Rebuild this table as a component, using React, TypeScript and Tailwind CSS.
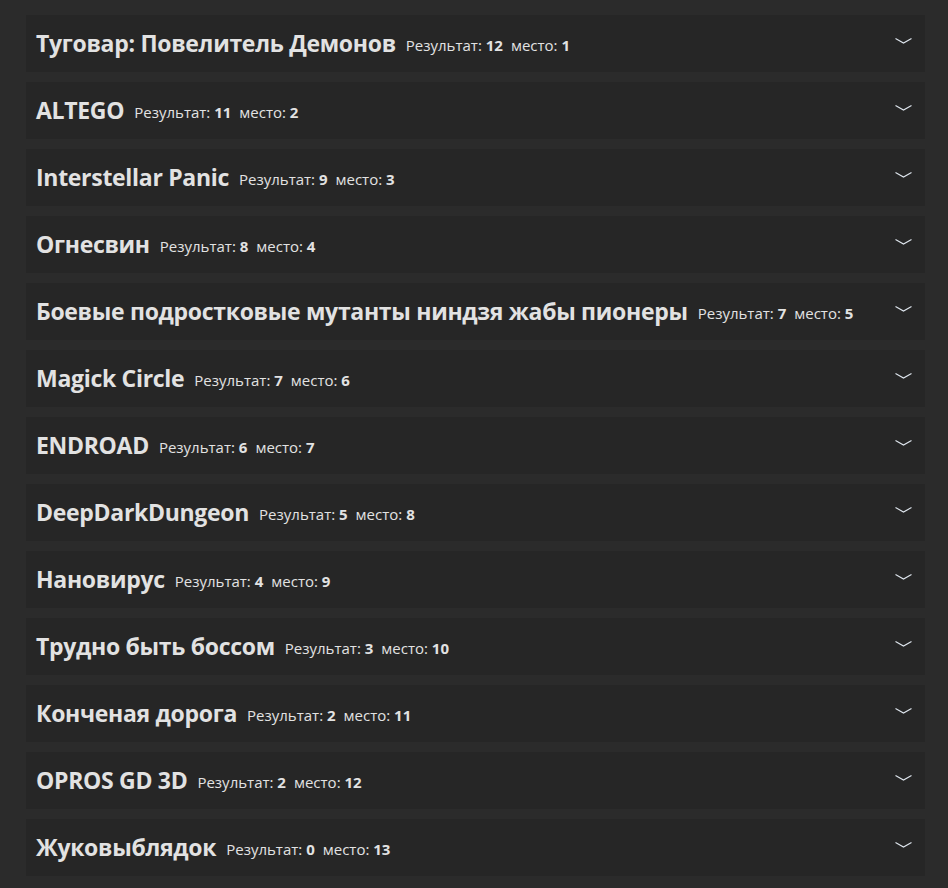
import React from "react";

const items: [string, number, number][] = [
  ["Туговар: Повелитель Демонов", 12, 1],
  ["ALTEGO", 11, 2],
  ["Interstellar Panic", 9, 3],
  ["Огнесвин", 8, 4],
  ["Боевые подростковые мутанты ниндзя жабы пионеры", 7, 5],
  ["Magick Circle", 7, 6],
  ["ENDROAD", 6, 7],
  ["DeepDarkDungeon", 5, 8],
  ["Нановирус", 4, 9],
  ["Трудно быть боссом", 3, 10],
  ["Конченая дорога", 2, 11],
  ["OPROS GD 3D", 2, 12],
  ["Жуковыблядок", 0, 13],
];

export default function App() {
  return (
    <div
      className="min-h-[888px] w-full bg-[#2b2b2b] pt-[15px] text-[#e2e2e2]"
      style={{ fontFamily: '"Open Sans", "Noto Sans", sans-serif' }}
    >
      <div className="ml-[26px] flex w-[899px] flex-col gap-[10px]">
        {items.map(([name, score, place]) => (
          <div
            key={name}
            className="flex h-[57px] items-center justify-between bg-[#262626] pl-[10px] pr-[13px]"
          >
            <div className="flex items-baseline leading-normal">
              <span className="text-[23px] font-bold tracking-[-0.3px]">{name}</span>
              <span className="ml-[10px] -translate-y-[1px] text-[15px]">
                Результат: <b className="font-bold">{score}</b>
              </span>
              <span className="ml-[8px] -translate-y-[1px] text-[15px]">
                место: <b className="font-bold">{place}</b>
              </span>
            </div>
            <svg width="17" height="8" viewBox="0 0 17 8" className="mb-[5px]">
              <path d="M0.5 1.5 L8.5 6 L16.5 1.5" fill="none" stroke="#dfe6ee" strokeWidth="1.1" />
            </svg>
          </div>
        ))}
      </div>
    </div>
  );
}
